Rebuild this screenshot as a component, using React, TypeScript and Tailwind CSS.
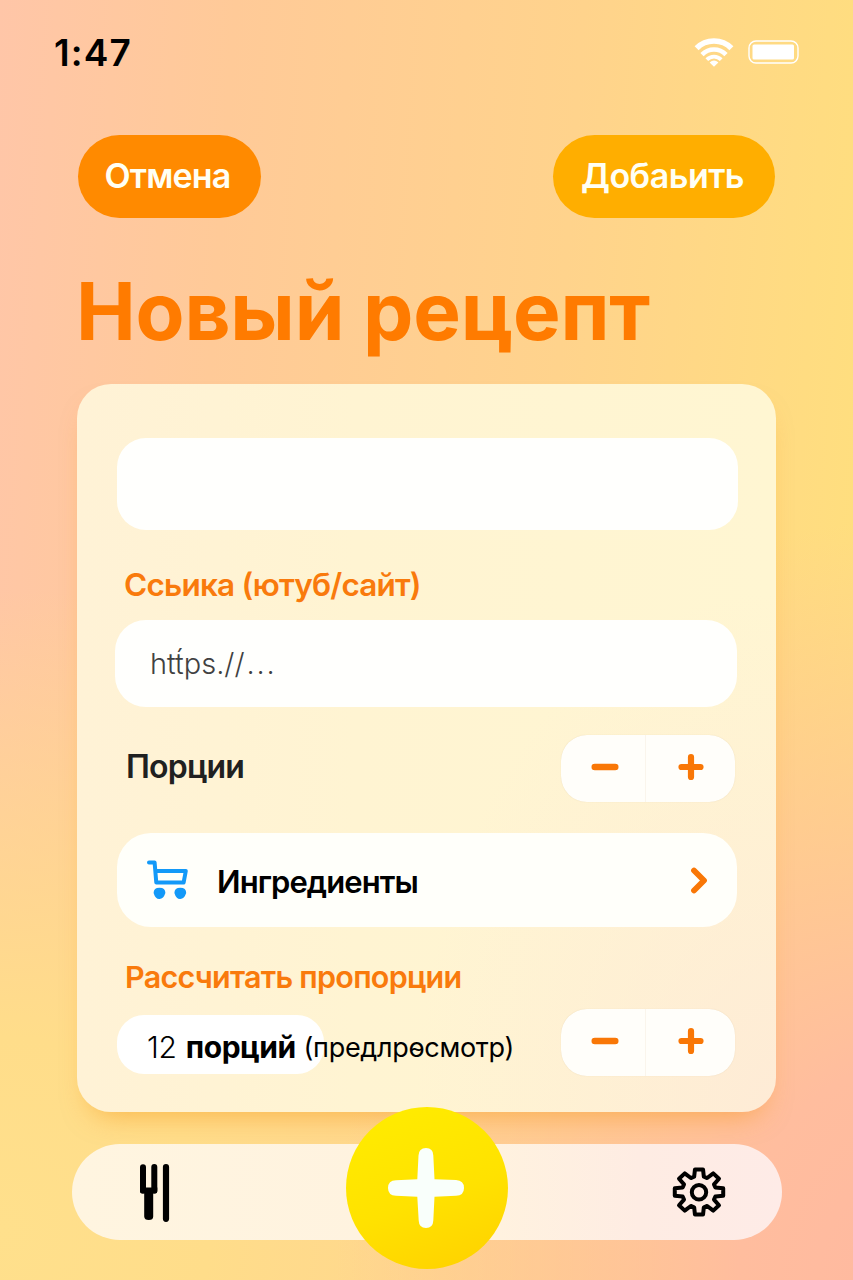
import React from "react";

const gearPath = (() => {
  const points: string[] = [];
  const profile: [number, number][] = [
    [-16.5, 16.4],
    [-9.5, 23.6],
    [9.5, 23.6],
    [16.5, 16.4],
  ];
  for (let tooth = 0; tooth < 8; tooth++) {
    for (const [offset, radius] of profile) {
      const angle = ((tooth * 45 + offset - 90) * Math.PI) / 180;
      const x = 27 + radius * 1.04 * Math.cos(angle);
      const y = 26 + radius * 0.97 * Math.sin(angle);
      points.push(`${x.toFixed(2)} ${y.toFixed(2)}`);
    }
  }
  return `M${points.join("L")}Z`;
})();

function StatusBar() {
  return (
    <header className="flex h-[135px] items-start justify-between pl-[54px] pr-[54px] pt-[31px]">
      <span className="text-[37px] font-semibold leading-[44px] tracking-[1.1px] text-black">1:47</span>
      <div className="flex items-center gap-[14px] pt-[6px]">
        <svg width="40" height="30" viewBox="0 0 40 30" fill="none" stroke="white" strokeWidth="5.6">
          <path d="M2.6 11.2C12 1.6 28 1.6 37.4 11.2" />
          <path d="M8 17.6C14.8 10.8 25.2 10.8 32 17.6" strokeWidth="4.6" />
          <path d="M12.8 22.7C17 18.5 23 18.5 27.2 22.7" strokeWidth="3.8" />
          <path d="M15.6 25.4Q20 21.4 24.4 25.4L20 29.8Z" fill="white" stroke="none" />
        </svg>
        <svg width="51" height="24" viewBox="0 0 51 24">
          <rect x="1" y="1" width="49" height="22" rx="7" fill="none" stroke="white" strokeWidth="1.4" />
          <rect x="4.5" y="4.5" width="41.5" height="15" rx="1.5" fill="white" />
        </svg>
      </div>
    </header>
  );
}

function Stepper() {
  return (
    <div className="flex h-[67px] w-[174px] overflow-hidden rounded-[26px] bg-[#fffefa] text-[#f97706] shadow-[0_0_1px_rgba(190,150,80,0.3)]">
      <button className="flex w-[85px] items-center justify-center border-r border-[#faf5ec] pl-[4px] pb-[4px]" aria-label="Меньше">
        <svg width="28" height="8" viewBox="0 0 28 8" stroke="currentColor" strokeWidth="6.6" strokeLinecap="round">
          <path d="M3.8 4H24.2" />
        </svg>
      </button>
      <button className="flex flex-1 items-center justify-center pb-[3px]" aria-label="Больше">
        <svg width="28" height="28" viewBox="0 0 28 28" stroke="currentColor" strokeWidth="6.2" strokeLinecap="round">
          <path d="M4.5 14H23.5M14 4V24" />
        </svg>
      </button>
    </div>
  );
}

export default function App() {
  return (
    <main className="flex h-[1280px] w-[853px] flex-col overflow-hidden bg-[linear-gradient(94deg,#ffc6a8_0%,#ffca98_25%,#ffd38c_62%,#ffe07c_100%)] font-['Inter','Liberation_Sans',sans-serif]">
      <div className="flex h-full flex-col bg-[radial-gradient(ellipse_560px_760px_at_105%_100%,#ffb9a0_0%,#ffbd9e_28%,#ffc79200_100%),radial-gradient(ellipse_700px_640px_at_0%_96%,#ffe08c_0%,#ffdd8a_30%,#ffdc8800_100%)]">
        <StatusBar />
        <div className="flex h-[83px] items-stretch justify-between pl-[78px] pr-[78px] text-[34px] font-semibold text-[#fffff4]">
          <button className="w-[183px] rounded-full bg-[#ff8a00] pb-[2px] pr-[4px] tracking-[-0.8px]">Отмена</button>
          <button className="w-[222px] rounded-full bg-[#ffae00] pb-[2px] pr-[3px] tracking-[-0.5px]">Добаьить</button>
        </div>
        <h1 className="h-[166px] whitespace-nowrap pl-[76px] pt-[44px] text-[80px] font-bold leading-[97px] tracking-[-0.2px] text-[#ff7b00]">Новый рецепт</h1>

        <section className="mx-[77px] flex h-[728px] shrink-0 flex-col rounded-[34px] bg-[radial-gradient(ellipse_360px_520px_at_100%_100%,#feebd6_0%,#feeed400_100%),linear-gradient(90deg,#fff2d6_0%,#fff4d2_40%,#fff6d2_100%)] pl-[40px] pr-[38px] pt-[54px] shadow-[0_16px_28px_-14px_rgba(245,140,0,0.5)]">
          <div className="h-[92px] shrink-0 rounded-[29px] bg-[#fffffd]" />
          <h2 className="mt-[36px] h-[54px] shrink-0 whitespace-nowrap pl-[7px] text-[31.5px] font-semibold leading-[38px] tracking-[-0.8px] text-[#f97a0c]">Ссьика (ютуб/сайт)</h2>
          <div className="-ml-[2px] mr-[1px] flex h-[87px] shrink-0 items-center rounded-[31px] bg-[#fffffd] pl-[35px] text-[29px] font-light text-[#414141]">
            <span>htt́ps.//</span>
            <span className="ml-[2px] tracking-[1.8px]">...</span>
          </div>
          <div className="mt-[28px] flex h-[67px] shrink-0 items-center justify-between pl-[9px] pr-[3px]">
            <span className="pb-[3px] text-[32px] font-semibold tracking-[-0.8px] text-[#202020]">Порции</span>
            <Stepper />
          </div>
          <button className="mr-[1px] mt-[31px] flex h-[94px] shrink-0 items-center rounded-[34px] bg-[#fffffa] pl-[29px] pr-[29px] text-left">
            <svg width="43" height="42" viewBox="0 0 43 42" fill="none" stroke="#1399f8" strokeWidth="4" strokeLinecap="round" strokeLinejoin="round">
              <path d="M3 3.4H8.6L10.3 23.6H37.6L39.8 12H10.5" />
              <path d="M7.6 34Q7.6 28.8 13.5 28.8T19.4 34Q17.5 39.8 13.5 40.1T7.6 34ZM28.4 34Q28.4 28.8 34.3 28.8T40.2 34Q38.3 39.8 34.3 40.1T28.4 34Z" fill="#1399f8" stroke="none" />
            </svg>
            <span className="ml-[28px] flex-1 pt-[4px] text-[31px] font-semibold tracking-[-0.9px] text-black">Ингредиенты</span>
            <svg width="18" height="28" viewBox="0 0 18 28" fill="none" stroke="#f97706" strokeWidth="5.8" strokeLinecap="round" strokeLinejoin="round">
              <path d="M4 4.5L14 14.5L4 24.5" />
            </svg>
          </button>
          <h2 className="mt-[31px] h-[51px] shrink-0 whitespace-nowrap pl-[8px] text-[30.5px] font-semibold leading-[38px] tracking-[-0.75px] text-[#f97a0c]">Рассчитать пропорции</h2>
          <div className="flex h-[67px] shrink-0 items-center justify-between pr-[3px]">
            <div className="mt-[4px] flex h-[59px] w-[207px] items-center whitespace-nowrap rounded-[27px] bg-white pl-[30px] pt-[5px] text-[30px] text-black">
              <span className="font-light tracking-[-0.2px]">12</span>
              <b className="ml-[9px] tracking-[-0.5px]">порций</b>
              <span className="ml-[8px] pt-[2px] text-[27px] tracking-[-0.3px]">(предлрөсмотр)</span>
            </div>
            <Stepper />
          </div>
        </section>

        <nav className="relative ml-[72px] mt-[32px] flex h-[96px] w-[710px] shrink-0 items-center justify-between rounded-full bg-[linear-gradient(90deg,#fff5e0_0%,#fff2df_60%,#feece3_80%,#feebe7_100%)] pl-[66px] pr-[56px]">
          <svg className="mt-[2px]" width="34" height="60" viewBox="0 0 34 60">
            <path d="M5 4.2V27.5M16.3 4V27.5" stroke="black" strokeWidth="6" strokeLinecap="round" />
            <path d="M2 24.5H19.3V28.5Q19.3 30.5 17.2 30.5H15.2V53.5Q15.2 57 10.8 57T6.2 53.5V30.5H4Q2 30.5 2 28.5Z" />
            <path d="M28 4V55.8" stroke="black" strokeWidth="6.2" strokeLinecap="round" />
          </svg>
          <svg width="54" height="52" viewBox="0 0 54 52" fill="none" stroke="black" strokeWidth="4" strokeLinejoin="round">
            <path d={gearPath} />
            <circle cx="27" cy="26.3" r="7.2" />
          </svg>
          <button className="absolute -top-[37px] left-[274px] flex size-[162px] items-center justify-center rounded-full bg-[linear-gradient(160deg,#ffed00_0%,#ffe200_55%,#ffd000_100%)]" aria-label="Новый рецепт">
            <svg className="-ml-[2px]" width="78" height="82" viewBox="0 0 78 82" fill="#f9fffb">
              <path d="M31.5 8.5Q31.8 1 39 1T46.3 8.5L47.5 32.2L69 33Q77 33.4 77 41T69 48.8L47.5 49.8L46.3 73.5Q46 81 39 81T31.7 73.5L30.3 49.8L9 48.8Q1 48.5 1 41T9 33.2L30.3 32.2Z" />
            </svg>
          </button>
        </nav>
      </div>
    </main>
  );
}
